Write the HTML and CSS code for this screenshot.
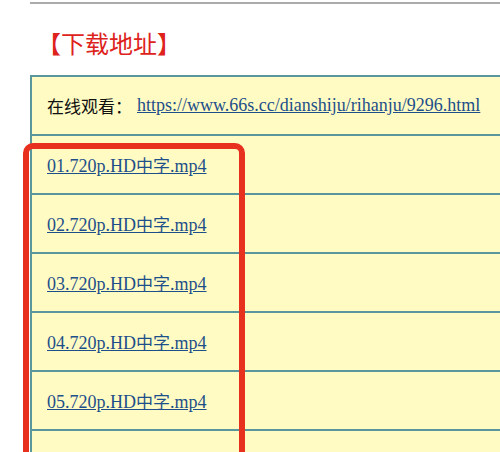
FILE: index.html
```html
<!DOCTYPE html>
<html lang="zh-CN">
<head>
<meta charset="utf-8">
<title>下载地址</title>
<link rel="stylesheet" href="styles.css">
</head>
<body>
<div class="page">
  <div class="rule"></div>
  <h2 class="title">【下载地址】</h2>
  <div class="list">
    <div class="row"><span class="cjk label">在线观看：</span><a href="#">https://www.66s.cc/dianshiju/rihanju/9296.html</a></div>
    <div class="row"><a href="#">01.720p.HD<span class="cjk">中字</span>.mp4</a></div>
    <div class="row"><a href="#">02.720p.HD<span class="cjk">中字</span>.mp4</a></div>
    <div class="row"><a href="#">03.720p.HD<span class="cjk">中字</span>.mp4</a></div>
    <div class="row"><a href="#">04.720p.HD<span class="cjk">中字</span>.mp4</a></div>
    <div class="row"><a href="#">05.720p.HD<span class="cjk">中字</span>.mp4</a></div>
    <div class="row"><a href="#">06.720p.HD<span class="cjk">中字</span>.mp4</a></div>
  </div>
  <div class="highlight"></div>
</div>
</body>
</html>
```

FILE: styles.css
```css
html, body {
  margin: 0;
  padding: 0;
  background: #ffffff;
}
body {
  width: 500px;
  height: 452px;
  overflow: hidden;
  font-family: "Liberation Serif", "Noto Sans CJK SC", serif;
  font-size: 18px;
  color: #111111;
}
.page {
  position: relative;
  padding-left: 30px;
}
.rule {
  margin-top: 2px;
  border-top: 2px solid #ababab;
}
.title {
  margin: 24px 0 17px 0;
  padding-left: 7px;
  height: 30px;
  line-height: 30px;
  font-size: 24px;
  font-weight: normal;
  color: #dd231c;
  font-family: "Noto Sans CJK SC", sans-serif;
}
.list {
  width: 620px;
  border: 2px solid #5a979c;
  border-right: none;
  background: #fffbc3;
}
.row {
  display: flex;
  align-items: center;
  height: 57px;
  padding-left: 15px;
  white-space: nowrap;
}
.row + .row {
  border-top: 2px solid #5a979c;
}
.cjk {
  font-family: "Noto Sans CJK SC", sans-serif;
  font-size: 17px;
}
.label {
  margin-right: 5px;
  color: #111111;
}
.row a {
  color: #1d4f8a;
  text-decoration: underline;
}
.highlight {
  position: absolute;
  left: 23px;
  top: 141px;
  width: 210px;
  height: 400px;
  border: 6px solid #e8301f;
  border-radius: 10px;
}
```
